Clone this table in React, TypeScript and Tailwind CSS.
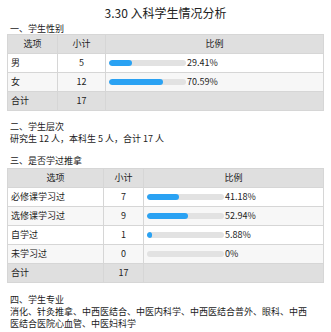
type Row = { label: string; count: number; pct: number }

const gender: Row[] = [
  { label: '男', count: 5, pct: 29.41 },
  { label: '女', count: 12, pct: 70.59 },
]

const tuina: Row[] = [
  { label: '必修课学习过', count: 7, pct: 41.18 },
  { label: '选修课学习过', count: 9, pct: 52.94 },
  { label: '自学过', count: 1, pct: 5.88 },
  { label: '未学习过', count: 0, pct: 0 },
]

function fmt(p: number) {
  return p === 0 ? '0%' : `${p.toFixed(2)}%`
}

function Bar({ pct }: { pct: number }) {
  return (
    <div className="flex items-center gap-[1px]">
      <div className="h-[6px] w-[77px] overflow-hidden rounded-full bg-[#e2e2e2]">
        <div className="h-full rounded-full bg-[#2aa2f3]" style={{ width: `${pct}%` }} />
      </div>
      <span>{fmt(pct)}</span>
    </div>
  )
}

function StatTable({ rows, total, cols }: { rows: Row[]; total: number; cols: [string, string, string] }) {
  const [c1, c2, c3] = cols
  return (
    <table className="w-full table-fixed border-collapse border border-[#d6d6d6]">
      <colgroup>
        <col className={c1} />
        <col className={c2} />
        <col className={c3} />
      </colgroup>
      <thead>
        <tr className="h-[19px] bg-[#dfdfdf]">
          <th className="border border-[#d6d6d6] font-normal">选项</th>
          <th className="border border-[#d6d6d6] font-normal">小计</th>
          <th className="border border-[#d6d6d6] font-normal">比例</th>
        </tr>
      </thead>
      <tbody>
        {rows.map((r, i) => (
          <tr key={r.label} className={`h-[19px] ${i % 2 === 0 ? 'bg-white' : 'bg-[#f7f7f7]'}`}>
            <td className="border border-[#d6d6d6] pl-[3px]">{r.label}</td>
            <td className="border border-[#d6d6d6] text-center">{r.count}</td>
            <td className="border border-[#d6d6d6] pl-[3px]">
              <Bar pct={r.pct} />
            </td>
          </tr>
        ))}
        <tr className="h-[19px] bg-[#dfdfdf]">
          <td className="border border-[#d6d6d6] pl-[3px]">合计</td>
          <td className="border border-[#d6d6d6] text-center">{total}</td>
          <td className="border border-[#d6d6d6]" />
        </tr>
      </tbody>
    </table>
  )
}

export default function App() {
  return (
    <div className="min-h-[332px] w-[331px] bg-white px-[7px] pt-[6px] text-[9px] leading-[12px] text-[#222] [font-family:'Noto_Sans_CJK_SC','Noto_Sans',sans-serif]">
      <h1 className="mb-[5px] text-center text-[12px] leading-[13px]">3.30 入科学生情况分析</h1>

      <p className="pl-[3px] leading-[10px]">一、学生性别</p>
      <StatTable rows={gender} total={17} cols={['w-[50px]', 'w-[48px]', 'w-auto']} />

      <p className="mt-[10px] pl-[3px]">二、学生层次</p>
      <p className="pl-[3px]">研究生 12 人，本科生 5 人，合计 17 人</p>

      <p className="mt-[10px] pl-[3px]">三、是否学过推拿</p>
      <div className="mt-[1px]">
        <StatTable rows={tuina} total={17} cols={['w-[96px]', 'w-[40px]', 'w-auto']} />
      </div>

      <p className="mt-[11px] pl-[3px]">四、学生专业</p>
      <p className="w-[307px] pl-[3px]">
        消化、针灸推拿、中西医结合、中医内科学、中西医结合普外、眼科、中西医结合医院心血管、中医妇科学
      </p>
    </div>
  )
}
